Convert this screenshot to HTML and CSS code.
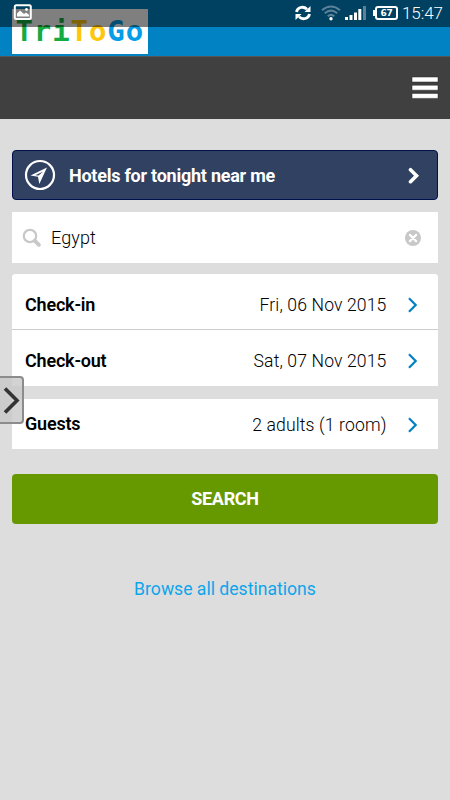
FILE: index.html
```html
<!DOCTYPE html>
<html lang="en">
<head>
<meta charset="utf-8">
<meta name="viewport" content="width=device-width, initial-scale=1">
<title>TriToGo</title>
<link rel="stylesheet" href="styles.css">
</head>
<body>
<div class="status">
  <svg class="status-picture" width="20" height="18" viewBox="0 0 20 18"><rect x="1.8" y="1.3" width="16" height="13.6" rx="1.5" fill="none" stroke="#fff" stroke-width="2"/><path d="M4 12.500V9.500l3-3 4 3.500 2-1.500 3 2.200V12.500z" fill="#fff"/><circle cx="13.500" cy="5.500" r="1.400" fill="#fff"/></svg>
  <div class="status-right">
    <svg class="sync" width="18" height="16" viewBox="0 0 18 16" fill="none" stroke="#fff" stroke-width="2.800"><path d="M2.500 7C3.300 2.600 9 .4 13 4.200M15.500 9C14.700 13.400 9 15.600 5 11.800"/><path d="M16.500 1v6h-6zM1.500 15V9h6z" fill="#fff" stroke="none"/></svg>
    <svg class="wifi" width="20" height="16" viewBox="0 0 20 16" fill="none" stroke="#5b8298" stroke-width="2"><path d="M1 5.200Q10-2.300 19 5.200M3.800 8.300Q10 3 16.200 8.300M6.700 11.300Q10 8.500 13.300 11.300"/><circle cx="10" cy="13.700" r="1.700" fill="#fff" stroke="none"/></svg>
    <svg class="signal" width="21" height="16" viewBox="0 0 21 16" fill="#fff"><path d="M0 12h3v3H0zM4.500 10h3v5h-3zM9 7.500h3V15H9zM13.300 4h3v11h-3z"/><path d="M18 1h3v14h-3z" fill="#5b8298"/></svg>
    <div class="battery">67</div>
    <span class="clock">15:47</span>
  </div>
</div>
<header class="brand"><div class="logo"><span class="green">Tri</span><span class="yellow">To</span><span class="blue">Go</span></div></header>
<nav class="nav"><svg width="28" height="24" viewBox="0 0 28 24"><path d="M1 1h26v5H1zM1 9.200h26v5H1zM1 17.400h26v5H1z" fill="#fff" stroke="#222" stroke-width=".5"/></svg></nav>
<main>
  <div class="tonight">
    <svg width="32" height="32" viewBox="0 0 32 32"><circle cx="16" cy="16" r="14" fill="none" stroke="#fff" stroke-width="2.200"/><path fill="#fff" fill-rule="evenodd" d="M23 8.500L6.500 16.500l7.500 1.300 1.300 7.200zM19.300 12.400l-4.800 4.200-3.200-.4z"/></svg>
    <span>Hotels for tonight near me</span>
    <svg class="arrow" width="12" height="18" viewBox="0 0 12 18" fill="none" stroke="#fff" stroke-width="3.600"><path d="M2.500 3.700L8.500 9.700 2.500 15.700" stroke-linecap="round"/></svg>
  </div>
  <div class="field">
    <svg width="20" height="20" viewBox="0 0 20 20" fill="none" stroke="#c8c8c8"><circle cx="8" cy="8" r="6.200" stroke-width="2.200"/><path d="M12.700 12.700l4.200 4.200" stroke-width="3.800" stroke-linecap="round"/></svg>
    <span>Egypt</span>
    <svg class="clear" width="18" height="18" viewBox="0 0 18 18"><circle cx="9" cy="9" r="8" fill="#c8c8c8"/><path d="M5.900 5.900l6.200 6.200M12.100 5.900l-6.200 6.200" stroke="#fff" stroke-width="2.200" stroke-linecap="round"/></svg>
  </div>
  <div class="dates">
    <div class="row checkin"><b>Check-in</b><span>Fri, 06 Nov 2015</span><svg width="12" height="16" viewBox="0 0 12 16"><path d="M2 1.300L8.700 8 2 14.700"/></svg></div>
    <div class="row checkout"><b>Check-out</b><span>Sat, 07 Nov 2015</span><svg width="12" height="16" viewBox="0 0 12 16"><path d="M2 1.300L8.700 8 2 14.700"/></svg></div>
  </div>
  <div class="row guests"><b>Guests</b><span>2 adults (1 room)</span><svg width="12" height="16" viewBox="0 0 12 16"><path d="M2 1.300L8.700 8 2 14.700"/></svg></div>
  <div class="search">SEARCH</div>
  <div class="browse">Browse all destinations</div>
</main>
<div class="drawer"><svg width="18" height="30" viewBox="0 0 18 30"><path d="M3 2.500L15 14.500 3 26.500" fill="none" stroke="#333" stroke-width="3.600"/></svg></div>
</body>
</html>
```
FILE: styles.css
```css
* { box-sizing: border-box; }
body { margin: 0; height: 800px; overflow: hidden; position: relative; background: #ddd; font-family: Roboto, sans-serif; font-size: 18px; color: #000; }
svg { display: block; flex: none; }
.status { position: absolute; z-index: 2; top: 0; left: 0; width: 450px; height: 27px; background: rgba(0,0,0,.5); display: flex; justify-content: space-between; padding: 0 8px 0 12.500px; color: #fff; }
.status-picture { margin-top: 4px; }
.status-right { display: flex; align-items: flex-start; }
.sync { margin-top: 5px; }
.wifi { margin: 5px 0 0 9px; }
.signal { margin: 5px 0 0 4px; }
.battery { position: relative; width: 23px; height: 14px; margin: 6px 0 0 9px; border: 2px solid #fff; border-radius: 3px; font: bold 9px/10px "DejaVu Sans", sans-serif; text-align: center; letter-spacing: -.3px; }
.battery::before { content: ""; position: absolute; left: -4px; top: 2px; width: 2px; height: 6px; background: #fff; }
.clock { margin-left: 4px; font-size: 17px; line-height: 27px; font-weight: 300; width: 40px; white-space: nowrap; letter-spacing: -.1px; }
.brand { height: 56px; background: #0082c3; padding: 9px 12px; }
.logo { width: 136px; height: 45px; background: #fff; padding-left: 3.5px; white-space: nowrap; font: bold 29px/44px "DejaVu Sans Mono", monospace; letter-spacing: .9px; }
.green { color: #15ab43; }
.yellow { color: #ffc60a; }
.blue { color: #059ce8; }
.nav { height: 63px; background: #404040; border-top: 1px solid #555; padding: 19px 11px 0 0; display: flex; justify-content: flex-end; }
main { padding: 31px 12px 0; }
.tonight { height: 50px; border: 1px solid #00124e; border-radius: 4px; background: #304162; color: #fff; font-weight: 700; display: flex; align-items: center; padding: 0 17px 0 11px; }
.tonight span { margin-left: 13px; letter-spacing: -.25px; }
.arrow { margin-left: auto; }
.field { height: 51px; margin-top: 12px; background: #fff; display: flex; align-items: center; padding: 0 16.500px 0 9.500px; font-weight: 300; }
.field span { margin-left: 9.500px; letter-spacing: .1px; }
.clear { margin-left: auto; }
.dates { margin-top: 11px; border-radius: 4px 4px 0 0; background: #fff; }
.row { display: flex; align-items: center; padding: 0 19px 0 13px; background: #fff; }
.row b { font-weight: 600; letter-spacing: -.2px; margin-top: -1px; }
.row span { margin-left: auto; margin-right: 20.500px; font-size: 17.6px; font-weight: 300; letter-spacing: .12px; }
.row svg { fill: none; stroke: #0082c3; stroke-width: 2.2; }
.checkin { height: 56px; padding-top: 7px; border-bottom: 1px solid #ccc; border-radius: 4px 4px 0 0; }
.checkout { height: 56px; padding-top: 6px; }
.guests { height: 50px; margin-top: 13px; padding-top: 2px; }
.guests b { margin-top: -3px; }
.search { height: 50px; margin-top: 25px; border-radius: 4px; background: #690; color: #fff; font-weight: 700; line-height: 50px; text-align: center; letter-spacing: -.3px; }
.browse { margin-top: 55px; line-height: 21px; font-size: 17.600px; color: #0da5eb; text-align: center; }
.drawer { position: absolute; left: -3px; top: 376px; width: 27px; height: 48px; border: 2px solid #8c8c8c; border-radius: 4px; background: rgba(200,200,200,.8); padding: 8px 0 0 3px; }
```
